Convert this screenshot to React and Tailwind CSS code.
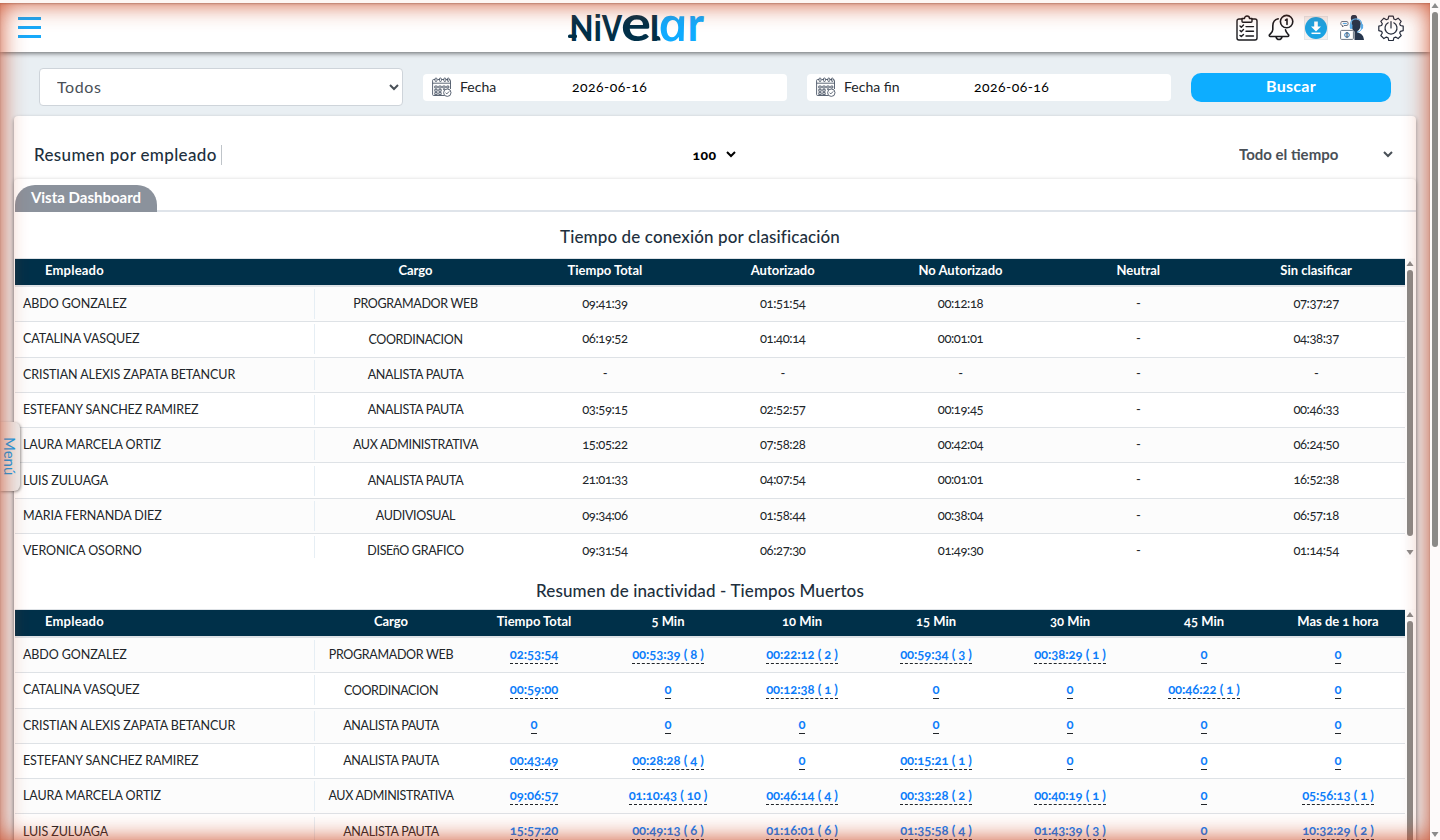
import clsx from "clsx";

const connectionHeaders = ["Tiempo Total", "Autorizado", "No Autorizado", "Neutral", "Sin clasificar"];

const connectionRows = [
  ["ABDO GONZALEZ", "PROGRAMADOR WEB", "09:41:39", "01:51:54", "00:12:18", "-", "07:37:27"],
  ["CATALINA VASQUEZ", "COORDINACION", "06:19:52", "01:40:14", "00:01:01", "-", "04:38:37"],
  ["CRISTIAN ALEXIS ZAPATA BETANCUR", "ANALISTA PAUTA", "-", "-", "-", "-", "-"],
  ["ESTEFANY SANCHEZ RAMIREZ", "ANALISTA PAUTA", "03:59:15", "02:52:57", "00:19:45", "-", "00:46:33"],
  ["LAURA MARCELA ORTIZ", "AUX ADMINISTRATIVA", "15:05:22", "07:58:28", "00:42:04", "-", "06:24:50"],
  ["LUIS ZULUAGA", "ANALISTA PAUTA", "21:01:33", "04:07:54", "00:01:01", "-", "16:52:38"],
  ["MARIA FERNANDA DIEZ", "AUDIVIOSUAL", "09:34:06", "01:58:44", "00:38:04", "-", "06:57:18"],
  ["VERONICA OSORNO", "DISEñO GRAFICO", "09:31:54", "06:27:30", "01:49:30", "-", "01:14:54"],
];

const idleHeaders = ["Tiempo Total", "5 Min", "10 Min", "15 Min", "30 Min", "45 Min", "Mas de 1 hora"];

const idleRows = [
  ["ABDO GONZALEZ", "PROGRAMADOR WEB", "02:53:54", "00:53:39 ( 8 )", "00:22:12 ( 2 )", "00:59:34 ( 3 )", "00:38:29 ( 1 )", "0", "0"],
  ["CATALINA VASQUEZ", "COORDINACION", "00:59:00", "0", "00:12:38 ( 1 )", "0", "0", "00:46:22 ( 1 )", "0"],
  ["CRISTIAN ALEXIS ZAPATA BETANCUR", "ANALISTA PAUTA", "0", "0", "0", "0", "0", "0", "0"],
  ["ESTEFANY SANCHEZ RAMIREZ", "ANALISTA PAUTA", "00:43:49", "00:28:28 ( 4 )", "0", "00:15:21 ( 1 )", "0", "0", "0"],
  ["LAURA MARCELA ORTIZ", "AUX ADMINISTRATIVA", "09:06:57", "01:10:43 ( 10 )", "00:46:14 ( 4 )", "00:33:28 ( 2 )", "00:40:19 ( 1 )", "0", "05:56:13 ( 1 )"],
  ["LUIS ZULUAGA", "ANALISTA PAUTA", "15:57:20", "00:49:13 ( 6 )", "01:16:01 ( 6 )", "01:35:58 ( 4 )", "01:43:39 ( 3 )", "0", "10:32:29 ( 2 )"],
];

function Logo() {
  return (
    <svg width="136" height="30" viewBox="0 0 136 30" className="shrink-0 overflow-visible" fill="#003049" fontFamily="Lato">
      <rect x="0" y="21.500" width="9" height="3.500" rx="1.500" />
      <text x="1.500" y="27.500" fontSize="36" fontWeight="900" textLength="24" lengthAdjust="spacingAndGlyphs">N</text>
      <text x="25.500" y="27.500" fontFamily="Liberation Sans" fontSize="36" fontWeight="700" textLength="8.500" lengthAdjust="spacingAndGlyphs">i</text>
      <text x="34" y="27.500" fontSize="36" fontWeight="900" textLength="20" lengthAdjust="spacingAndGlyphs">V</text>
      <text x="53" y="27.500" fontSize="49" fontWeight="700" textLength="30" lengthAdjust="spacingAndGlyphs">e</text>
      <text x="82" y="27.500" fontSize="35" fontWeight="900" textLength="9" lengthAdjust="spacingAndGlyphs">l</text>
      <path d="M86 23h3.500c2 0 3 1.800 3 4.500H86z" />
      <g fill="#0fabff">
        <text transform="translate(92.500 27.500) skewX(12)" fontFamily="Open Sans" fontStyle="italic" fontSize="46" fontWeight="600" textLength="30" lengthAdjust="spacingAndGlyphs">a</text>
        <text x="119.500" y="27.500" fontSize="48" fontWeight="700" textLength="16.500" lengthAdjust="spacingAndGlyphs">r</text>
      </g>
    </svg>
  );
}

function ChecklistIcon() {
  return (
    <svg width="22" height="26" viewBox="0 0 22 26" fill="none" stroke="#1b1b1f" strokeWidth="1.4" strokeLinecap="round" strokeLinejoin="round">
      <path d="M6 4H3a2 2 0 0 0-2 2v17a2 2 0 0 0 2 2h16a2 2 0 0 0 2-2V6a2 2 0 0 0-2-2h-3" />
      <path d="M6 3.5h2.5a2.5 2.5 0 0 1 5 0H16v2.8a1 1 0 0 1-1 1H7a1 1 0 0 1-1-1z" />
      <path d="m4 11 1.3 1.2L7.5 10M4 15.6l1.3 1.2 2.2-2.2M4 20.4l1.3 1.2 2.2-2.2M10 11.6h7.5M10 16.2h7.5M10 21h7.5" />
    </svg>
  );
}

function BellIcon() {
  return (
    <svg width="26" height="27" viewBox="0 0 26 27" fill="none" stroke="#1b1b1f" strokeWidth="1.6" strokeLinecap="round" strokeLinejoin="round">
      <path d="M10.2 4.8C6.5 5.6 4.8 8.500 4.800 12v3.500c0 2.500-2 3.800-3.300 5.300-.5.700 0 1.700.8 1.700h17.400c.9 0 1.300-1 .8-1.700-1.300-1.500-2.700-2.800-3-5" />
      <path d="M8 22.700c.5 2 1.500 2.800 3 2.800s2.500-.8 3-2.800" />
      <circle cx="18.600" cy="7.600" r="6.200" />
      <path d="m17.500 6.200 1.500-1.200v5.500" />
    </svg>
  );
}

function DownloadIcon() {
  return (
    <svg width="24" height="24" viewBox="0 0 24 24">
      <rect x=".5" y=".5" width="23" height="23" fill="#f4f1f0" stroke="#e4e7e9" />
      <circle cx="12" cy="12" r="11" fill="#1ba3e3" />
      <path d="M10.200 5.500h3.600v5h3.200l-5 5-5-5h3.200z" fill="#fff" />
      <path d="M7.500 17.300h9" stroke="#fff" strokeWidth="1.500" />
    </svg>
  );
}

function AgentIcon() {
  return (
    <svg width="24" height="26" viewBox="0 0 24 26" fill="none">
      <circle cx="14" cy="3" r="3.200" fill="#26364d" />
      <path d="M11.500 8.500C11.500 5.500 13 4.500 16 4.500s4.800 1.500 4.800 4.500c0 4-1.800 6.500-3.300 7v1.500c3 .8 6 2 6.500 7.500H14.500v-8.500c-2-1-3-4-3-8z" fill="#26364d" />
      <path d="M10.500 10C10.500 5.500 13 3.800 16 3.800s5.800 2.200 5.800 6.200" stroke="#5aaeea" strokeWidth="1.300" />
      <rect x="9.800" y="9" width="2.600" height="5" rx="1.200" fill="#5aaeea" />
      <rect x="20.500" y="9" width="2.600" height="5" rx="1.200" fill="#5aaeea" />
      <path d="M21.500 14c-.8 2-2.500 3-4.500 3" stroke="#5aaeea" />
      <path d="M2 6.500h5c1.500 0 1.500 4 0 4H4l-1.500 1.500V10.500C0 10.500.5 6.500 2 6.500z" stroke="#49566a" strokeWidth=".8" />
      <path d="M2.800 8.500h4" stroke="#5aaeea" strokeWidth="1.200" />
      <rect x=".6" y="15.400" width="12.800" height="9" rx="1" fill="#fff" stroke="#6c7785" />
      <circle cx="7" cy="20" r="2.300" stroke="#2675b5" />
      <path d="M7 17.300v5.300" stroke="#26364d" />
    </svg>
  );
}

function PowerGearIcon() {
  return (
    <svg width="26" height="26" viewBox="0 0 26 26" fill="none" stroke="#232b3b" strokeWidth="1.200" strokeLinecap="round" strokeLinejoin="round">
      <path d="M10.800 1.200h4.400l.7 2.800 1.700.7 2.500-1.500 3.100 3.100-1.500 2.500.7 1.700 2.800.7v4.400l-2.800.7-.7 1.700 1.500 2.500-3.100 3.100-2.500-1.500-1.700.7-.7 2.800h-4.400l-.7-2.800-1.700-.7-2.500 1.500-3.100-3.100 1.500-2.500-.7-1.700-2.800-.7v-4.400l2.800-.7.7-1.700-1.500-2.500 3.100-3.100 2.500 1.500 1.700-.7z" />
      <path d="M10.200 7.800a6 6 0 1 0 5.600 0M13 6.500v6.500" />
    </svg>
  );
}

function CalendarIcon() {
  return (
    <svg width="20" height="20" viewBox="0 0 20 20" fill="none" stroke="#4b5666" strokeWidth=".9">
      <path d="M.6 7V3.500a1 1 0 0 1 1-1H3m2.500 0h2.200m2 0H12m2 0h2m1 0h.5a1 1 0 0 1 1 1V12M.6 7v10.500a1 1 0 0 0 1 1h11M.6 6.200h18" />
      <rect x="3" y="1" width="2" height="3.500" rx="1" />
      <rect x="7.400" y="1" width="2" height="3.500" rx="1" />
      <rect x="11.800" y="1" width="2" height="3.500" rx="1" />
      <rect x="15.500" y="1" width="1.600" height="3.500" rx=".8" />
      <path d="M2.800 9h2.400v2H2.800zm4 0h2.400v2H6.800zm4 0h2.400v2h-2.400zm4 0h2v2h-2zm-12 3.300h2.400v2H2.800zm4 0h2.400v2H6.800zm-4 3.300h2.400v2H2.800zm4 0h2.400v2H6.800zM11 12.300h2" />
      <circle cx="15.300" cy="15.700" r="3.700" fill="#fff" />
      <path d="m13.500 15.600 1.300 1.300 2.400-2.500" />
    </svg>
  );
}

function DateField({ label, value, valueClass }) {
  return (
    <div className="flex h-[27px] w-[364px] items-center rounded bg-white pl-[9px] text-sm text-[#212529]">
      <CalendarIcon />
      <span className={clsx("ml-2 shrink-0", valueClass)}>{label}</span>
      <span className="tracking-[0.45px] text-black">{value}</span>
    </div>
  );
}

function Scrollbar({ className, thumb }) {
  return (
    <div className={clsx("flex w-2.5 shrink-0 flex-col items-center bg-[#fcfcfc]/70", className)}>
      <svg width="8" height="5" viewBox="0 0 8 5" className="mt-[3px] shrink-0"><path d="M4 0 7.500 5h-7z" fill="#8b8b8b" /></svg>
      <div className={clsx("mt-1 w-1.5 shrink-0 rounded-full bg-[#8b8a88]", thumb)} />
      <svg width="8" height="5" viewBox="0 0 8 5" className="mt-auto mb-[3px] shrink-0"><path d="M4 5 7.500 0h-7z" fill="#8b8b8b" /></svg>
    </div>
  );
}

function DataTable({ headers, rows, cols, links }) {
  return (
    <div className="w-[1390px] shrink-0 border-t border-[#dee2e6] text-[13px]">
      <div className={clsx("grid h-[28px] border-b-2 border-[#dee2e6] bg-[#003049] text-center font-bold leading-[23px] text-white", cols)}>
        <div className="pl-[30px] text-left tracking-[0.2px]">Empleado</div>
        <div>Cargo</div>
        {headers.map((h) => (
          <div key={h}>{h}</div>
        ))}
      </div>
      {rows.map((row, i) => (
        <div
          key={row[0]}
          className={clsx("grid h-[35.3px] items-center border-b border-[#dee2e6] text-center text-[#212529]", cols, i % 2 === 0 && "bg-[#fcfcfc]")}
        >
          <div className="h-[30px] border-r border-[#e6eef4] pl-2 text-left text-[12.5px] leading-[30px] tracking-[-0.1px]">{row[0]}</div>
          <div className="pt-px text-[12.5px] tracking-[-0.33px]">{row[1]}</div>
          {row.slice(2).map((cell, j) => (
            <div key={j} className={clsx("pb-px", !links && "tracking-[-0.4px]")}>
              {links ? (
                <a className="inline-block border-b border-dashed border-[#212529] font-bold leading-[18px] tracking-[-0.05px] text-[#0d7dfa]">{cell}</a>
              ) : (
                cell
              )}
            </div>
          ))}
        </div>
      ))}
    </div>
  );
}

export default function App() {
  return (
    <div className="flex h-[840px] w-[1440px] overflow-hidden bg-[#fdf6f4] font-['Lato','Open_Sans',sans-serif] oldstyle-nums">
      <div className="relative mt-[3px] h-[837px] w-[1430px] overflow-hidden bg-[#e9eff3]">
        <header className="relative flex h-[49px] items-center bg-white pr-[26px] pl-[18px] shadow-[0_1px_5px_rgba(0,0,0,0.6)]">
          <div className="flex w-[550px] flex-col gap-1.5">
            <div className="h-[3px] w-[23px] bg-[#17a9fa]" />
            <div className="h-[3px] w-[23px] bg-[#17a9fa]" />
            <div className="h-[3px] w-[23px] bg-[#17a9fa]" />
          </div>
          <Logo />
          <div className="ml-auto flex items-center">
            <ChecklistIcon />
            <div className="ml-2.5">
              <BellIcon />
            </div>
            <div className="ml-2.5">
              <DownloadIcon />
            </div>
            <div className="ml-3">
              <AgentIcon />
            </div>
            <div className="ml-3.5">
              <PowerGearIcon />
            </div>
          </div>
        </header>

        <div className="flex h-16 items-center gap-5 pt-1.5 pl-[39px]">
          <select className="h-[38px] w-[364px] rounded border border-[#ced4da] bg-white pb-0.5 pl-[13px] text-base tracking-[0.6px] text-[#495057]">
            <option>Todos</option>
          </select>
          <DateField label="Fecha" value="2026-06-16" valueClass="w-[112px]" />
          <DateField label="Fecha fin" value="2026-06-16" valueClass="w-[130px]" />
          <button className="h-[29px] w-[200px] rounded-[10px] bg-[#0dadff] pb-0.5 text-base font-bold tracking-[0.3px] text-white">Buscar</button>
        </div>

        <main className="ml-[14px] w-[1402px] rounded bg-white shadow-[0_2px_4px_rgba(0,0,0,0.4)]">
          <div className="flex h-[63px] items-center justify-between pt-[14px] pr-5 pl-5">
            <h1 className="w-[188px] border-r border-[#bfc4c9] text-[17px] leading-5 font-medium tracking-[0.35px] text-[#212f3d]">Resumen por empleado</h1>
            <select className="mr-[30px] w-[50px] bg-white text-[14px] font-black tracking-[0.5px] text-black">
              <option>100</option>
            </select>
            <select className="w-[161px] bg-white pb-px text-[15px] font-bold text-[#495057]">
              <option>Todo el tiempo</option>
            </select>
          </div>

          <section className="h-[700px] rounded bg-white pl-px shadow-[0_1px_4px_rgba(0,0,0,0.25)]">
            <div className="flex h-[33px] items-end border-b-2 border-[#dfe4ea]">
              <button className="-mb-0.5 h-[27px] w-[142px] rounded-t-[20px] bg-[#8b929c] pb-0.5 text-[15px] font-bold text-white">Vista Dashboard</button>
            </div>

            <h2 className="h-[46px] w-[1370px] pt-[13px] text-center text-[17px] leading-6 font-medium tracking-[0.12px] text-[#212f3d]">Tiempo de conexión por clasificación</h2>
            <div className="flex h-[300px] overflow-hidden">
              <DataTable
                headers={connectionHeaders}
                rows={connectionRows}
                cols="grid-cols-[300px_201px_repeat(5,1fr)]"
              />
              <Scrollbar className="h-[300px]" thumb="h-[266px]" />
            </div>

            <h2 className="h-[51px] w-[1370px] pt-[21px] text-center text-[17px] leading-6 font-medium tracking-[0.12px] text-[#212f3d]">Resumen de inactividad - Tiempos Muertos</h2>
            <div className="flex h-[300px] overflow-hidden">
              <DataTable
                headers={idleHeaders}
                rows={idleRows}
                cols="grid-cols-[300px_152px_repeat(7,1fr)]"
                links
              />
              <Scrollbar className="h-[300px]" thumb="h-[266px]" />
            </div>
          </section>
        </main>

        <div className="absolute top-[419px] left-0 flex h-[69px] w-5 items-center justify-center rounded-r-md bg-[#ededed] text-[15px] text-[#0fa0f0] shadow-[1px_1px_3px_rgba(0,0,0,0.4)] [writing-mode:vertical-rl]">
          Menú
        </div>
        <div className="pointer-events-none absolute inset-0 shadow-[inset_0_0_25px_rgba(200,60,20,0.9),inset_0_1px_2px_rgba(0,0,0,0.3)]" />
      </div>
      <Scrollbar className="h-[840px]" thumb="h-[535px]" />
    </div>
  );
}
